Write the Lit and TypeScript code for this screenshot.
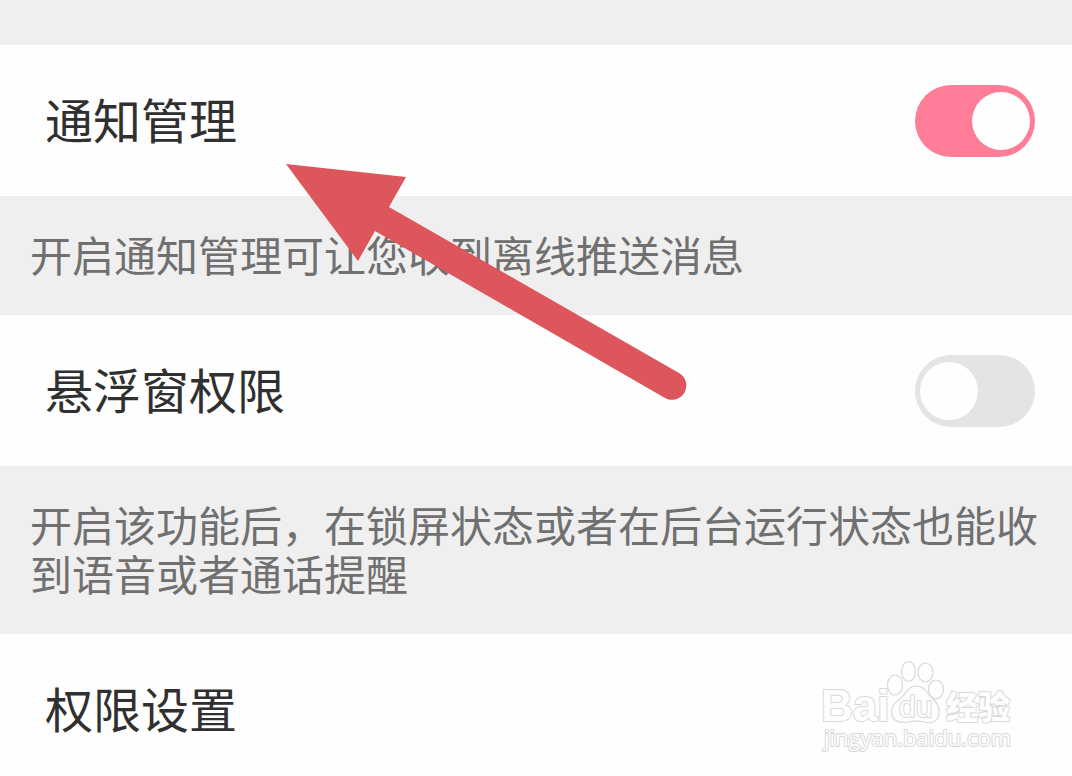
import { LitElement, html, css } from "lit";
import { customElement, property } from "lit/decorators.js";

@customElement("setting-row")
export class SettingRow extends LitElement {
  static styles = css`
    :host {
      display: block;
      background: #fefefe;
    }
    .row {
      display: flex;
      align-items: center;
      justify-content: space-between;
      box-sizing: border-box;
      min-height: 151px;
      padding: 0 37px 0 45px;
      color: #303030;
      font-size: 48px;
      line-height: 72px;
    }
    .name {
      padding-bottom: 6px;
    }
    .switch {
      appearance: none;
      display: flex;
      align-items: center;
      flex: none;
      box-sizing: border-box;
      width: 120px;
      height: 72px;
      margin: 0;
      padding: 0 5px;
      border-radius: 36px;
      background: #e4e4e4;
      cursor: pointer;
    }
    .switch::before {
      content: "";
      width: 58px;
      height: 58px;
      border-radius: 50%;
      background: #fefefe;
    }
    .switch:checked {
      justify-content: flex-end;
      background: #ff7d96;
    }
  `;

  @property() label = "";
  @property() control: "switch" | "none" = "none";
  @property({ type: Boolean }) on = false;

  render() {
    return this.control === "switch"
      ? html`<div class="row">
          <label class="name" for="toggle">${this.label}</label>
          <input class="switch" id="toggle" type="checkbox" role="switch" .checked=${this.on} />
        </div>`
      : html`<div class="row"><span class="name">${this.label}</span></div>`;
  }
}

@customElement("brand-mark")
export class BrandMark extends LitElement {
  static styles = css`
    :host {
      display: block;
    }
    svg {
      display: block;
      overflow: visible;
    }
    .shape {
      fill: #fefefe;
      stroke: #d8d8d8;
      stroke-width: 1.2;
    }
    .text {
      fill: #fefefe;
      stroke: #d8d8d8;
      stroke-width: 2;
      paint-order: stroke;
      stroke-linejoin: round;
    }
    .latin {
      font: bold 44px "Liberation Sans", Arial, sans-serif;
    }
    .small {
      font: 30px "Liberation Sans", Arial, sans-serif;
    }
    .han {
      font: 900 32px "Noto Sans CJK SC", sans-serif;
    }
    .site {
      font: 22px "Open Sans", sans-serif;
    }
  `;

  render() {
    return html`<svg width="200" height="100" viewBox="0 0 200 100" aria-label="Baidu">
      <text class="text latin" x="0" y="61">Bai</text>
      <ellipse class="shape" cx="74" cy="25" rx="7.5" ry="10" />
      <ellipse class="shape" cx="87.5" cy="11.5" rx="7" ry="10" />
      <ellipse class="shape" cx="104.5" cy="12.5" rx="7.5" ry="9.5" />
      <ellipse class="shape" cx="115" cy="29.5" rx="7.5" ry="9.5" />
      <path
        class="shape"
        d="M95 26C87 26 86 33 80 38C73 43 69 49 71 55C73 63 81 63 87 62C92 61 98 61 103 62C110 64 117 62 118 54C119 47 116 43 111 38C105 33 104 26 95 26Z"
      />
      <text class="text small" x="78" y="57">du</text>
      <text class="text han" x="125" y="59">经验</text>
      <text class="text site" x="3" y="86">jingyan.baidu.com</text>
    </svg>`;
  }
}

@customElement("app-root")
export class AppRoot extends LitElement {
  static styles = css`
    :host {
      display: block;
      position: relative;
      min-height: 100vh;
      overflow: hidden;
      background: #fefefe;
      font-family: "Noto Sans CJK SC", sans-serif;
    }
    .top {
      height: 45px;
      background: #efefef;
    }
    .note {
      margin: 0;
      padding: 33px 30px 37px;
      background: #efefef;
      color: #707070;
      font-size: 42px;
      line-height: 49px;
    }
    .arrow {
      position: absolute;
      top: 160px;
      left: 280px;
      fill: #dc565c;
      pointer-events: none;
    }
    .mark {
      position: absolute;
      top: 660px;
      right: 51px;
    }
  `;

  render() {
    return html`
      <main>
        <div class="top"></div>
        <setting-row label="通知管理" control="switch" on></setting-row>
        <p class="note">开启通知管理可让您收到离线推送消息</p>
        <setting-row label="悬浮窗权限" control="switch"></setting-row>
        <p class="note">开启该功能后，在锁屏状态或者在后台运行状态也能收到语音或者通话提醒</p>
        <setting-row label="权限设置"></setting-row>
      </main>
      <svg class="arrow" width="410" height="245" viewBox="0 0 410 245" aria-hidden="true">
        <path d="M6 4L126 17L109 47L399 213A14 14 0 0 1 385 238L95 71L78 101Z" />
      </svg>
      <brand-mark class="mark"></brand-mark>
    `;
  }
}
